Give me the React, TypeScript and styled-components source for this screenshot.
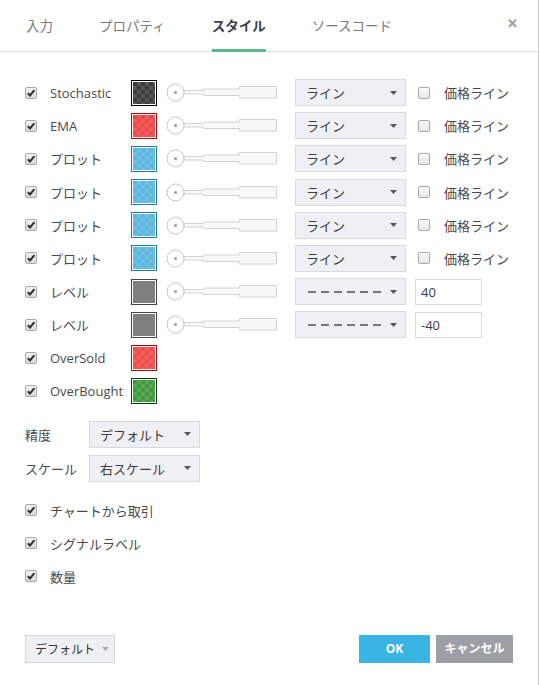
import React from "react";
import styled, { createGlobalStyle } from "styled-components";

const GlobalStyle = createGlobalStyle`
  html, body {
    margin: 0;
    padding: 0;
    background: #ffffff;
  }
  body {
    font-family: "Open Sans", "Noto Sans CJK JP", sans-serif;
    font-size: 13px;
    color: #4a4a4a;
  }
`;

type PlotRow = {
  label: string;
  color: string;
  edge: string;
  checker?: boolean;
  kind?: "line" | "level" | "none";
  level?: string;
};

const plots: PlotRow[] = [
  { label: "Stochastic", color: "#3c3c3c", edge: "#000000", checker: true, kind: "line" },
  { label: "EMA", color: "#f04646", edge: "#c40000", checker: true, kind: "line" },
  { label: "プロット", color: "#5cb6e0", edge: "#1a7ca6", checker: true, kind: "line" },
  { label: "プロット", color: "#5cb6e0", edge: "#1a7ca6", checker: true, kind: "line" },
  { label: "プロット", color: "#5cb6e0", edge: "#1a7ca6", checker: true, kind: "line" },
  { label: "プロット", color: "#5cb6e0", edge: "#1a7ca6", checker: true, kind: "line" },
  { label: "レベル", color: "#7f7f7f", edge: "#444444", kind: "level", level: "40" },
  { label: "レベル", color: "#7f7f7f", edge: "#444444", kind: "level", level: "-40" },
  { label: "OverSold", color: "#f04a4a", edge: "#c40000", checker: true, kind: "none" },
  { label: "OverBought", color: "#3f9a3f", edge: "#0e3f0e", checker: true, kind: "none" },
];

const Check = ({ on = true }: { on?: boolean }) => (
  <Box $on={on}>
    {on && (
      <svg width="10" height="10" viewBox="0 0 10 10">
        <path d="M1.8 5.2 L4 7.4 L8.4 2.2" fill="none" stroke="#2e2e2e" strokeWidth="2" />
      </svg>
    )}
  </Box>
);

const Arrow = ({ color = "#555" }: { color?: string }) => (
  <svg width="7" height="4" viewBox="0 0 7 4">
    <path d="M0 0 H7 L3.5 4 Z" fill={color} />
  </svg>
);

const Slider = () => (
  <svg width="112" height="19" viewBox="0 0 112 19">
    <path
      d="M18 7.5 H37.5 V6 H73.5 V3.5 H110.5 V15 H73.5 V12.5 H37.5 V11 H18 Z"
      fill="#f8f8f8"
      stroke="#d2d2d2"
      strokeWidth="1"
    />
    <circle cx="9.5" cy="9.5" r="8.5" fill="#ffffff" stroke="#c3c6ce" strokeWidth="1" />
    <circle cx="9.5" cy="9.5" r="1.6" fill="#9ba0aa" />
  </svg>
);

const App = () => {
  return (
    <Dialog>
      <GlobalStyle />
      <Header>
        <Tabs>
          <Tab>入力</Tab>
          <Tab>プロパティ</Tab>
          <Tab $active>スタイル</Tab>
          <Tab>ソースコード</Tab>
        </Tabs>
        <Close>✕</Close>
      </Header>

      <Body>
        <Rows>
          {plots.map((p, i) => (
            <Row key={i}>
              <Check />
              <Label>{p.label}</Label>
              <Swatch $color={p.color} $edge={p.edge} $checker={!!p.checker} />
              {p.kind !== "none" && (
                <SliderWrap>
                  <Slider />
                </SliderWrap>
              )}
              {p.kind === "line" && (
                <>
                  <Select $width={111}>
                    <span>ライン</span>
                    <Arrow />
                  </Select>
                  <PriceLine>
                    <Check on={false} />
                    <span>価格ライン</span>
                  </PriceLine>
                </>
              )}
              {p.kind === "level" && (
                <>
                  <Select $width={111}>
                    <Dashes>
                      {Array.from({ length: 6 }).map((_, j) => (
                        <Dash key={j} />
                      ))}
                    </Dashes>
                    <Arrow />
                  </Select>
                  <Input>{p.level}</Input>
                </>
              )}
            </Row>
          ))}
        </Rows>

        <Settings>
          <SettingRow>
            <SettingLabel>精度</SettingLabel>
            <Select $width={111}>
              <span>デフォルト</span>
              <Arrow />
            </Select>
          </SettingRow>
          <SettingRow>
            <SettingLabel>スケール</SettingLabel>
            <Select $width={111}>
              <span>右スケール</span>
              <Arrow />
            </Select>
          </SettingRow>
        </Settings>

        <Options>
          <Row>
            <Check />
            <Label>チャートから取引</Label>
          </Row>
          <Row>
            <Check />
            <Label>シグナルラベル</Label>
          </Row>
          <Row>
            <Check />
            <Label>数量</Label>
          </Row>
        </Options>
      </Body>

      <Footer>
        <DefaultButton>
          <span>デフォルト</span>
          <Arrow color="#a9abb0" />
        </DefaultButton>
        <Actions>
          <OkButton>OK</OkButton>
          <CancelButton>キャンセル</CancelButton>
        </Actions>
      </Footer>
    </Dialog>
  );
};

export default App;

const Dialog = styled.div`
  width: 538px;
  height: 685px;
  border-right: 1px solid #c9c9c9;
  background: #ffffff;
  display: flex;
  flex-direction: column;
  box-sizing: content-box;
`;

const Header = styled.div`
  height: 51px;
  border-bottom: 1px solid #e0e3e8;
  display: flex;
  align-items: stretch;
  justify-content: space-between;
  padding: 0 20px 0 26px;
`;

const Tabs = styled.div`
  display: flex;
  gap: 46px;
`;

const Tab = styled.div<{ $active?: boolean }>`
  display: flex;
  align-items: center;
  box-sizing: border-box;
  font-size: 13.5px;
  font-family: "Noto Sans CJK JP", sans-serif;
  color: ${(p) => (p.$active ? "#3a4250" : "#7b7b7b")};
  font-weight: ${(p) => (p.$active ? 700 : 400)};
  border-bottom: 3px solid ${(p) => (p.$active ? "#5ab88a" : "transparent")};
  margin-bottom: -1px;
`;

const Close = styled.div`
  display: flex;
  align-items: center;
  padding-bottom: 6px;
  font-size: 13px;
  color: #9a9a9a;
  font-weight: 700;
`;

const Body = styled.div`
  flex: 1;
  padding: 27px 0 0 25px;
  display: flex;
  flex-direction: column;
`;

const Rows = styled.div`
  display: flex;
  flex-direction: column;
  gap: 6.2px;
`;

const Row = styled.div`
  display: flex;
  align-items: center;
  height: 27px;
`;

const Box = styled.span<{ $on: boolean }>`
  width: 10px;
  height: 10px;
  flex: none;
  border: 1px solid #a9a9a9;
  border-radius: 2px;
  background: ${(p) =>
    p.$on ? "linear-gradient(#f2f2f2, #d9d9d9)" : "linear-gradient(#fafafa, #e6e6e6)"};
  display: flex;
  align-items: center;
  justify-content: center;
  margin-right: 13px;
`;

const Label = styled.span`
  width: 81px;
  white-space: nowrap;
  color: #4a4a4a;
  font-size: 13px;
`;

const Swatch = styled.span<{ $color: string; $edge: string; $checker: boolean }>`
  width: 22px;
  height: 22px;
  flex: none;
  border: 1px solid ${(p) => p.$edge};
  box-shadow: inset 0 0 0 1px #ffffff;
  padding: 1px;
  background-clip: content-box;
  background-color: ${(p) => p.$color};
  background-image: ${(p) =>
    p.$checker
      ? "conic-gradient(rgba(255,255,255,0.13) 25%, transparent 0 50%, rgba(255,255,255,0.13) 0 75%, transparent 0)"
      : "none"};
  background-size: 8px 8px;
  background-origin: content-box;
`;

const SliderWrap = styled.span`
  display: flex;
  margin-left: 9px;
`;

const Select = styled.div<{ $width: number }>`
  width: ${(p) => p.$width}px;
  height: 27px;
  box-sizing: border-box;
  background: #eff0f4;
  border: 1px solid #d8dae0;
  display: flex;
  align-items: center;
  justify-content: space-between;
  padding: 0 8px 0 10px;
  color: #3c3c3c;
  font-size: 13px;
  margin-left: 17px;
  flex: none;
`;

const PriceLine = styled.div`
  display: flex;
  align-items: center;
  margin-left: 12px;
  white-space: nowrap;
  color: #4a4a4a;

  & > span:first-child {
    margin-right: 14px;
  }
`;

const Dashes = styled.span`
  display: flex;
  gap: 5px;
  margin-left: 2px;
`;

const Dash = styled.span`
  width: 8px;
  height: 2px;
  background: #777;
`;

const Input = styled.div`
  width: 67px;
  height: 26px;
  box-sizing: border-box;
  border: 1px solid #d8dae0;
  margin-left: 9px;
  display: flex;
  align-items: center;
  padding-left: 5px;
  color: #3c3c3c;
  font-size: 13px;
`;

const Settings = styled.div`
  display: flex;
  flex-direction: column;
  gap: 7px;
  margin-top: 16px;
`;

const SettingRow = styled.div`
  display: flex;
  align-items: center;

  ${Select} {
    margin-left: 0;
  }
`;

const SettingLabel = styled.span`
  width: 64px;
  color: #4a4a4a;
`;

const Options = styled.div`
  display: flex;
  flex-direction: column;
  gap: 6px;
  margin-top: 15px;
`;

const Footer = styled.div`
  height: 50px;
  padding: 0 25px 0 25px;
  display: flex;
  align-items: flex-start;
  justify-content: space-between;
`;

const DefaultButton = styled.div`
  width: 90px;
  height: 28px;
  box-sizing: border-box;
  background: #eff0f4;
  border: 1px solid #d4d6dc;
  display: flex;
  align-items: center;
  gap: 7px;
  padding-left: 9px;
  font-size: 12px;
  color: #333;
`;

const Actions = styled.div`
  display: flex;
  gap: 6px;
`;

const OkButton = styled.div`
  width: 71px;
  height: 28px;
  background: #3ab3e5;
  color: #ffffff;
  font-weight: 700;
  font-size: 12px;
  display: flex;
  align-items: center;
  justify-content: center;
  padding-bottom: 2px;
  box-sizing: border-box;
`;

const CancelButton = styled(OkButton)`
  width: 77px;
  background: #9c9fa5;
`;
